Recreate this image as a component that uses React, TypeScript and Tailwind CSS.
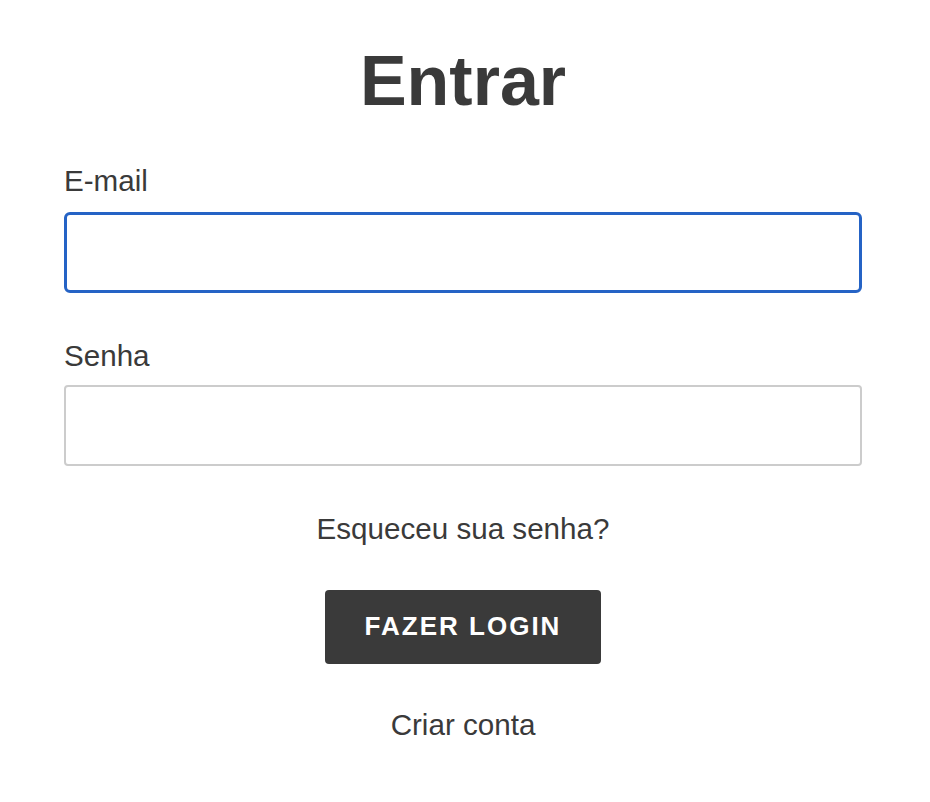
export default function App() {
  return (
    <section className="min-h-screen bg-white font-['Liberation_Sans',Arial,sans-serif] text-[#3a3a3a]">
      <form className="flex flex-col pl-[64px] pr-[68px] pt-[39px]" onSubmit={(e) => e.preventDefault()}>
        <h1 className="text-center text-[70px] leading-[1.2] font-bold">Entrar</h1>

        <label htmlFor="email" className="mt-[40px] text-[29.6px] leading-[1.2]">
          E-mail
        </label>
        <input
          id="email"
          type="email"
          className="mt-[13px] h-[81px] w-full rounded-[6px] border-[3px] border-[#2563c5] bg-white px-4 outline-0"
        />

        <label htmlFor="password" className="mt-[45px] text-[29.6px] leading-[1.2]">
          Senha
        </label>
        <input
          id="password"
          type="password"
          className="mt-[12px] h-[81px] w-full rounded-[4px] border-2 border-[#cccccc] bg-white px-4 outline-0"
        />

        <a href="#" className="mt-[45px] self-center text-[29.6px] leading-[1.2]">
          Esqueceu sua senha?
        </a>

        <button
          type="submit"
          className="mt-[43px] h-[74px] w-[276px] self-center rounded-[4px] bg-[#3a3a3a] text-[26px] font-bold tracking-[2px] text-white"
        >
          FAZER LOGIN
        </button>

        <a href="#" className="mt-[43px] self-center text-[29.6px] leading-[1.2]">
          Criar conta
        </a>
      </form>
    </section>
  )
}
